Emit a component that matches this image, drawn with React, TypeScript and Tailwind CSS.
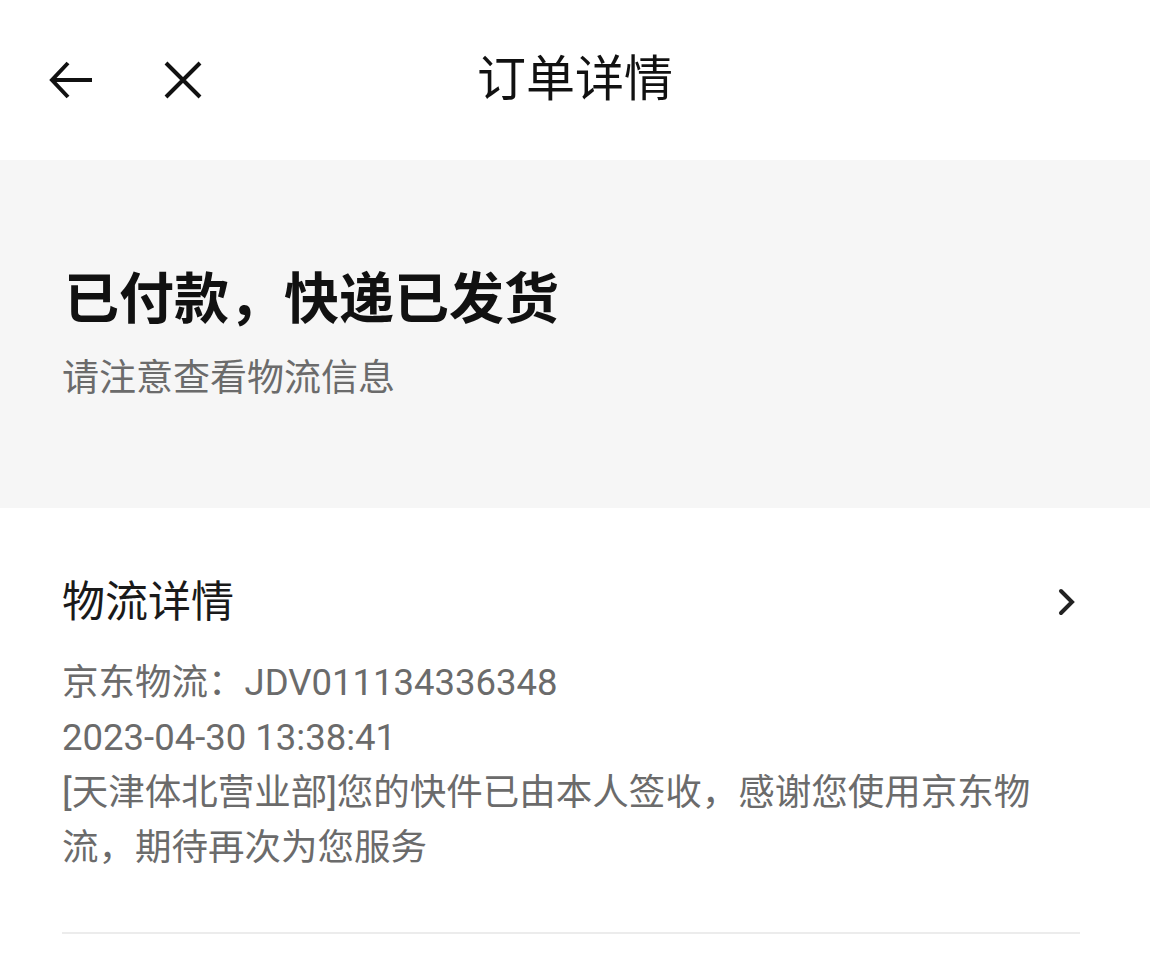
import React from 'react';

const BackIcon = () => (
  <svg width="46" height="40" viewBox="0 0 46 40" fill="none" stroke="#111" strokeWidth="4">
    <path d="M44 20 H5" />
    <path d="M20 3 L4 20 L20 37" />
  </svg>
);

const CloseIcon = () => (
  <svg width="40" height="40" viewBox="0 0 40 40" fill="none" stroke="#111" strokeWidth="4">
    <path d="M3 3 L37 37 M37 3 L3 37" />
  </svg>
);

const ChevronRight = () => (
  <svg width="20" height="28" viewBox="0 0 20 28" fill="none" stroke="#222" strokeWidth="4" strokeLinecap="round">
    <path d="M4 3 L15 14 L4 25" />
  </svg>
);

export default function App() {
  return (
    <div className="w-[1150px] min-h-[959px] bg-white font-['Roboto','Noto_Sans_CJK_SC',sans-serif]">
      {/* top bar */}
      <div className="grid h-[160px] grid-cols-[1fr_auto_1fr] items-center">
        <div className="flex items-center gap-[69px] pl-[48px]">
          <BackIcon />
          <CloseIcon />
        </div>
        <div className="text-[49px] leading-[58px] text-[#111]">订单详情</div>
        <div />
      </div>

      {/* status */}
      <div className="flex h-[348px] flex-col justify-center bg-[#f6f6f6] px-[62px]">
        <div className="pl-[2px] text-[55px] font-bold leading-[64px] text-[#111]">已付款，快递已发货</div>
        <div className="mt-[26px] text-[37px] leading-[44px] text-[#6b6b6b]">请注意查看物流信息</div>
      </div>

      {/* logistics */}
      <div className="px-[62px] pt-[66px]">
        <div className="flex items-center justify-between pr-[11px]">
          <div className="text-[43px] leading-[56px] text-[#1a1a1a]">物流详情</div>
          <ChevronRight />
        </div>
        <div className="mt-[25px] pr-[40px] text-[36.5px] leading-[55px] text-[#6b6b6b]">
          <div>京东物流：JDV011134336348</div>
          <div>2023-04-30 13:38:41</div>
          <div>[天津体北营业部]您的快件已由本人签收，感谢您使用京东物流，期待再次为您服务</div>
        </div>
        <div className="mt-[57px] h-[2px] w-[1018px] bg-[#ececec]" />
      </div>
    </div>
  );
}
